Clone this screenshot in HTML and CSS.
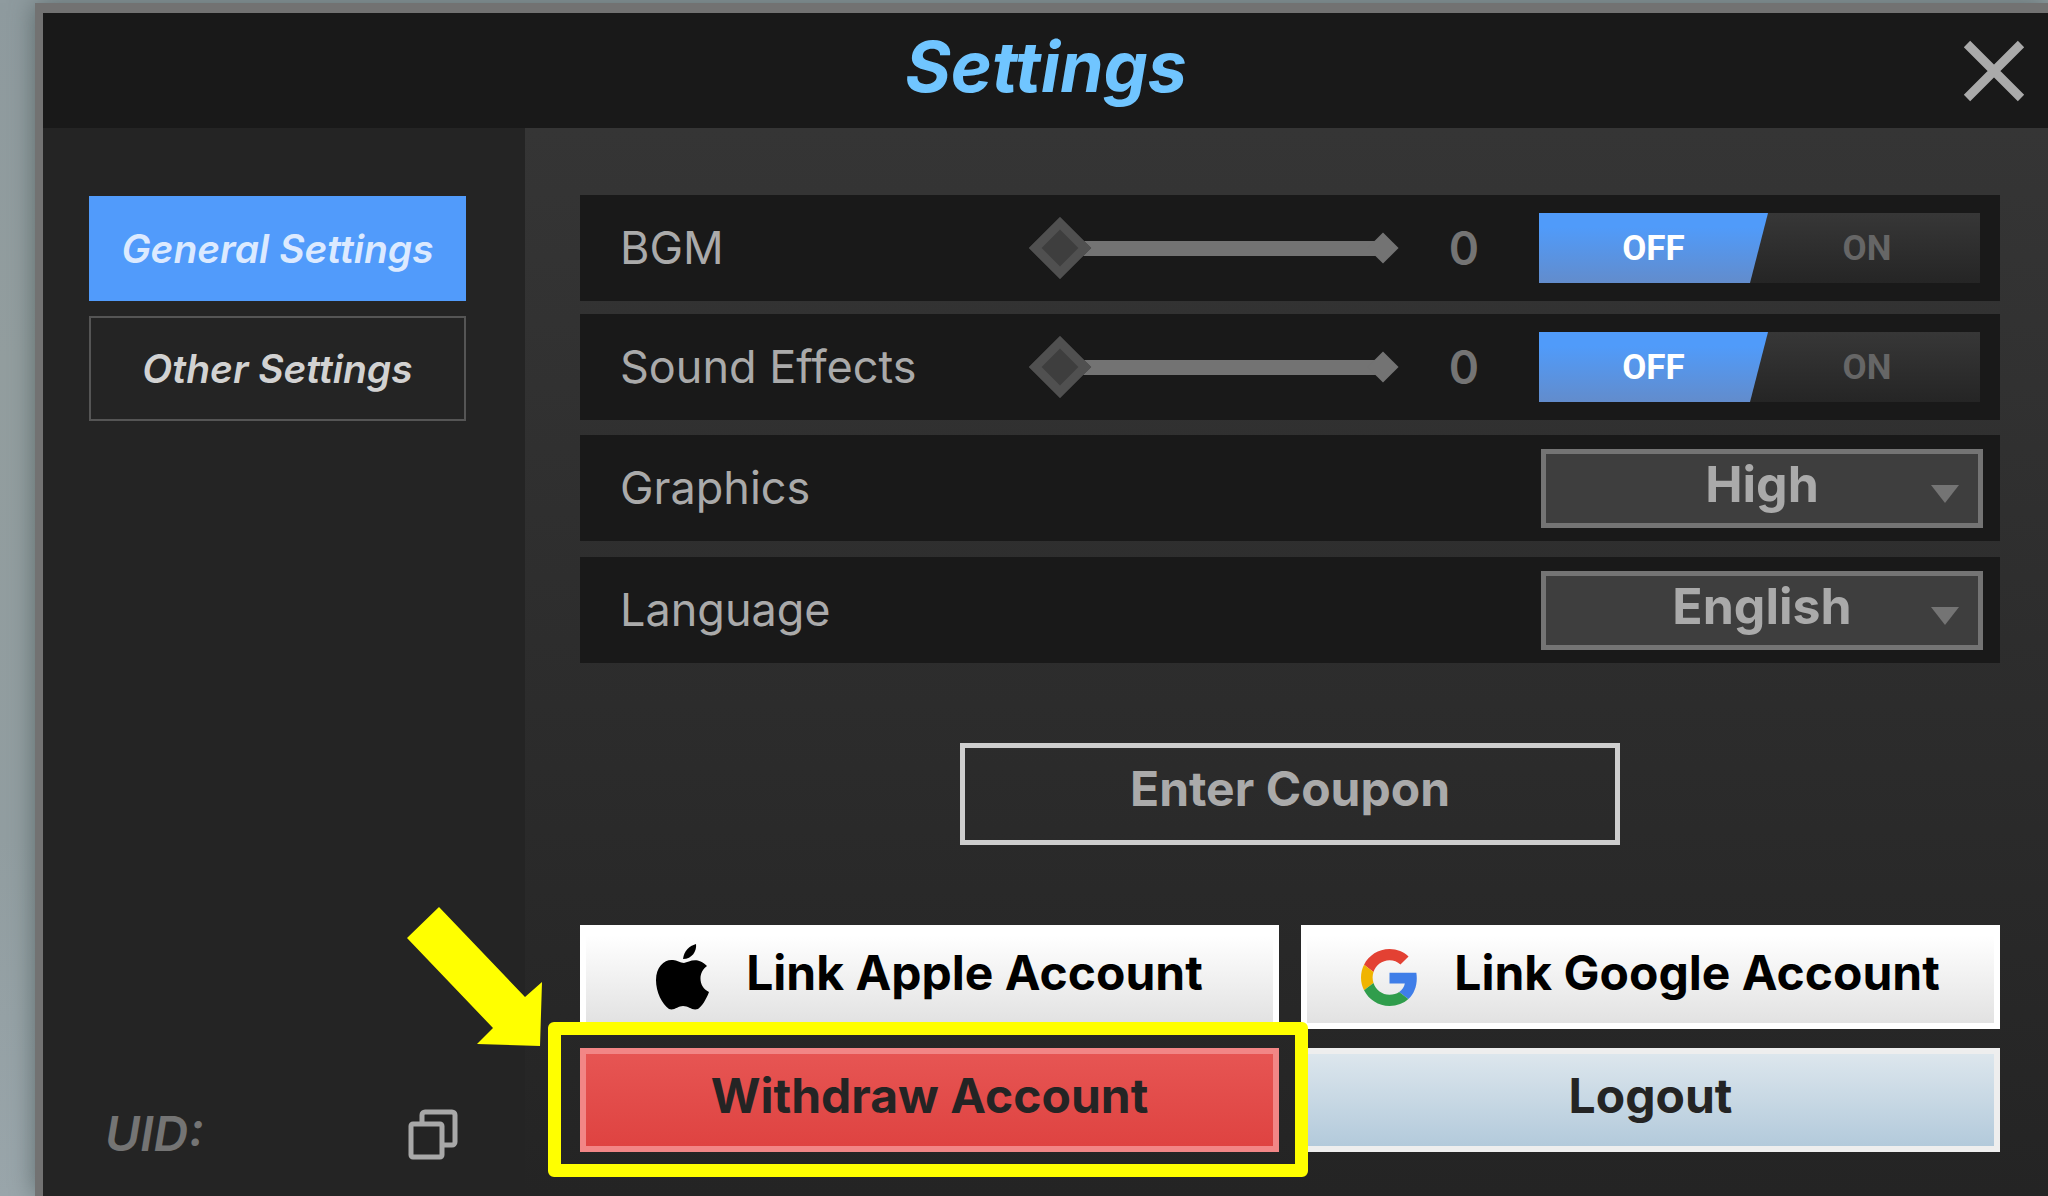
FILE: index.html
```html
<!doctype html>
<html lang="en">
<head>
  <meta charset="utf-8">
  <meta name="viewport" content="width=device-width, initial-scale=1">
  <title>Settings</title>
<link rel="stylesheet" href="styles.css">
</head>

<body>

<div id="panel">

  <header id="header">
    <h1>Settings</h1>
    <button class="close" type="button" aria-label="Close">
      <svg width="62" height="62" viewBox="0 0 62 62"><path d="M4 4L58 58M58 4L4 58"/></svg>
    </button>
  </header>

  <div id="content">

    <nav id="sidebar">
      <button class="tab active" type="button">General Settings</button>
      <button class="tab" type="button">Other Settings</button>
      <div class="uid">
        <span>UID:</span>
        <button class="copy" type="button" aria-label="Copy UID">
          <svg width="50" height="51" viewBox="0 0 50 51">
            <path d="M14 14V6a3 3 0 0 1 3-3h27a3 3 0 0 1 3 3v27a3 3 0 0 1-3 3h-8"/>
            <rect x="3" y="15" width="31" height="33" rx="2"/>
          </svg>
        </button>
      </div>
    </nav>

    <main id="main">

      <div class="rows audio">
        <div class="row">
          <label class="name" for="bgm">BGM</label>
          <div class="slider"><input type="range" id="bgm" min="0" max="100" value="0"></div>
          <output class="value" for="bgm">0</output>
          <div class="toggle">
            <input type="radio" name="bgm-on" id="bgm-off" checked>
            <label class="off" for="bgm-off">OFF</label>
            <input type="radio" name="bgm-on" id="bgm-on">
            <label class="on" for="bgm-on">ON</label>
          </div>
        </div>
        <div class="row">
          <label class="name" for="sfx">Sound Effects</label>
          <div class="slider"><input type="range" id="sfx" min="0" max="100" value="0"></div>
          <output class="value" for="sfx">0</output>
          <div class="toggle">
            <input type="radio" name="sfx-on" id="sfx-off" checked>
            <label class="off" for="sfx-off">OFF</label>
            <input type="radio" name="sfx-on" id="sfx-on">
            <label class="on" for="sfx-on">ON</label>
          </div>
        </div>
      </div>

      <div class="rows display">
        <div class="row">
          <label class="name" for="graphics">Graphics</label>
          <div class="select">
            <select id="graphics"><option>High</option></select>
          </div>
        </div>
        <div class="row">
          <label class="name" for="language">Language</label>
          <div class="select">
            <select id="language"><option>English</option></select>
          </div>
        </div>
      </div>

      <button class="coupon" type="button">Enter Coupon</button>

      <div id="account">
        <button class="btn link" type="button">
          <svg width="54" height="66" viewBox="0 0 54 66">
            <path d="M27 15C28 7 33 2 40 0C41 7 36 15 27 15Z"/>
            <path d="M51 22C42 28 42 43 53 48C50 56 46 62 42 65C36 67 33 62 27 62C22 62 18 67 13 65C6 60 0 48 0 36C0 22 9 15 17 16C21 16 24 19 28 19C33 18 41 12 51 22Z"/>
          </svg>
          <span>Link Apple Account</span>
        </button>
        <button class="btn link" type="button">
          <svg width="57" height="57" viewBox="0 0 48 48">
            <path fill="#e34133" d="M24 9.500c3.540 0 6.710 1.220 9.210 3.600l6.850-6.850C35.900 2.380 30.470 0 24 0 14.620 0 6.510 5.380 2.560 13.220l7.980 6.190C12.430 13.720 17.740 9.500 24 9.500z"/>
            <path fill="#3f7ee8" d="M46.980 24.550c0-1.570-.15-3.090-.38-4.550H24v9.020h12.940c-.58 2.960-2.260 5.480-4.780 7.180l7.730 6c4.510-4.180 7.090-10.360 7.090-17.650z"/>
            <path fill="#f0b400" d="M10.530 28.590c-.48-1.450-.76-2.990-.76-4.590s.27-3.140.76-4.590l-7.980-6.190C.92 16.460 0 20.120 0 24c0 3.880.92 7.540 2.560 10.780l7.970-6.190z"/>
            <path fill="#309d4c" d="M24 48c6.480 0 11.930-2.130 15.890-5.810l-7.730-6c-2.150 1.450-4.920 2.300-8.160 2.300-6.260 0-11.570-4.220-13.470-9.910l-7.980 6.190C6.510 42.620 14.620 48 24 48z"/>
          </svg>
          <span>Link Google Account</span>
        </button>
        <div class="marked">
          <button class="btn withdraw" type="button">Withdraw Account</button>
          <div class="frame"></div>
          <svg class="arrow" width="135" height="139" viewBox="0 0 135 139">
            <path d="M0 31L32 0L118 90L135 75L133 139L70 137L86 121Z"/>
          </svg>
        </div>
        <button class="btn logout" type="button">Logout</button>
      </div><!-- /#account -->

    </main>

  </div>

</div>

</body>
</html>
```
FILE: styles.css
```css
html {
  box-sizing: border-box;
}
*, *:before, *:after {
  box-sizing: inherit;
}

body {
  margin: 0;
  padding: 3px 0 0 35px;
  font-family: Inter, 'Liberation Sans', sans-serif;
  background: linear-gradient(#8f9b9f, #939e9f 30%, #929ea1 70%, #9aa6ab);
  overflow: hidden;
}

button, select {
  font-family: inherit;
  margin: 0;
  padding: 0;
  border-radius: 0;
  cursor: pointer;
}

#panel {
  display: flex;
  flex-direction: column;
  min-height: calc(100vh - 3px);
  border-top: 10px solid #727272;
  border-left: 8px solid #727272;
  box-shadow: 0 0 24px rgba(70, 85, 85, 0.7);
}

#header {
  display: flex;
  align-items: center;
  height: 115px;
  padding: 0 23px 0 86px;
  background: #191919;
}

h1 {
  flex: 1;
  margin: 0;
  padding: 0 0 8px 0;
  text-align: center;
  font-size: 70px;
  line-height: 80px;
  font-weight: 700;
  font-style: italic;
  color: #70c5ff;
}

.close {
  height: 62px;
  border: 0;
  background: none;
}

.close path {
  stroke: #aaa;
  stroke-width: 9;
}

#content {
  flex: 1;
  display: flex;
}

#sidebar {
  display: flex;
  flex-direction: column;
  flex: 0 0 482px;
  padding: 68px 59px 34px 46px;
  background: #242424;
}

.tab {
  height: 105px;
  margin-bottom: 15px;
  border: 2px solid #555;
  background: none;
  color: #d2d2d2;
  font-size: 39px;
  font-weight: 600;
  font-style: italic;
}

.tab.active {
  border-color: #519bfb;
  background: #519bfb;
  color: #dceaff;
}

.uid {
  display: flex;
  justify-content: space-between;
  align-items: center;
  margin-top: auto;
  padding: 0 8px 0 16px;
  font-size: 48px;
  line-height: 56px;
  font-weight: 600;
  font-style: italic;
  color: #747474;
}

.copy {
  height: 51px;
  border: 0;
  background: none;
}

.copy svg, .close svg {
  display: block;
  fill: none;
}

.copy svg {
  stroke: #a8a8a8;
  stroke-width: 5;
}

#main {
  flex: 1;
  display: flex;
  flex-direction: column;
  padding: 67px 48px 44px 55px;
  background: linear-gradient(#353535, #2b2b2b 60%, #242424);
}

.rows {
  display: grid;
  gap: 16px;
}

.audio {
  gap: 13px;
  margin-bottom: 15px;
}

.row {
  display: flex;
  align-items: center;
  height: 106px;
  padding: 0 17px 0 40px;
  background: #191919;
}

.audio .row {
  padding-right: 20px;
}

.name {
  flex: 1;
  padding-bottom: 2px;
  font-size: 45px;
  color: #aaa;
}

/* slider */
.slider {
  position: relative;
  width: 345px;
  height: 44px;
}

.slider:after {
  content: "";
  position: absolute;
  right: -11px;
  top: 11px;
  width: 22px;
  height: 22px;
  background: #737373;
  transform: rotate(45deg);
}

.slider input {
  display: block;
  width: 100%;
  height: 44px;
  margin: 0;
  -webkit-appearance: none;
  appearance: none;
  background: linear-gradient(#737373, #737373) center / 100% 15px no-repeat;
}

.slider input::-webkit-slider-thumb {
  -webkit-appearance: none;
  width: 44px;
  height: 44px;
  border: 9px solid #505050;
  background: #3e3e3e;
  transform: rotate(45deg);
}

.value {
  width: 156px;
  padding-left: 6px;
  text-align: center;
  font-size: 46px;
  font-weight: 600;
  color: #747474;
}

/* off / on switch */
.toggle {
  display: flex;
  position: relative;
  width: 441px;
  height: 70px;
  background: linear-gradient(#373737, #252525);
}

.toggle input {
  position: absolute;
  opacity: 0;
}

.toggle label {
  flex: 1;
  padding-top: 1px;
  text-align: center;
  font-family: Roboto, sans-serif;
  font-size: 35px;
  line-height: 70px;
  font-weight: 700;
  color: #666;
}

.toggle .off {
  flex: 0 0 229px;
  height: 70px;
  clip-path: polygon(0 0, 100% 0, calc(100% - 18px) 100%, 0 100%);
}

.toggle .on {
  padding-right: 14px;
}

.toggle input:checked + label {
  color: #fff;
  background: linear-gradient(#509bfa 20%, #628ccc);
}

.select {
  position: relative;
  width: 442px;
}

.select:after {
  content: "";
  position: absolute;
  right: 24px;
  top: 36px;
  border: 14px solid transparent;
  border-top: 18px solid #747474;
  border-bottom: 0;
  pointer-events: none;
}

select {
  -webkit-appearance: none;
  appearance: none;
  display: block;
  width: 100%;
  height: 79px;
  padding-bottom: 10px;
  border: 5px solid #747474;
  background: #3e3e3e;
  color: #aaa;
  font-size: 50px;
  font-weight: 700;
  text-align: center;
  text-align-last: center;
}

.coupon {
  align-self: center;
  width: 660px;
  height: 102px;
  margin: 80px 0;
  padding-bottom: 12px;
  border: 5px solid #cecece;
  background: none;
  color: #aaa;
  font-size: 48px;
  font-weight: 700;
}

#account {
  display: grid;
  grid-template-columns: 1fr 1fr;
  gap: 19px 22px;
}

.btn {
  display: flex;
  justify-content: center;
  align-items: center;
  gap: 36px;
  width: 100%;
  height: 104px;
  padding-bottom: 10px;
  border: 6px solid #fff;
  background-origin: border-box;
  color: #242424;
  font-size: 48px;
  font-weight: 700;
  white-space: nowrap;
}

.link {
  padding-bottom: 0;
  background-image: linear-gradient(#fff 10%, #e0e0e0);
  color: #000;
}

.link span {
  padding-bottom: 10px;
}

.withdraw {
  border-color: #f28686;
  background-image: linear-gradient(#e75654, #de4240);
}

.logout {
  border-color: #eee;
  background-image: linear-gradient(#dfe8ee, #b0c8da);
}

.marked {
  position: relative;
  z-index: 1;
}

.frame {
  position: absolute;
  inset: -26px -29px -25px -32px;
  border: 13px solid #ff0;
  border-radius: 6px;
  pointer-events: none;
}

.arrow {
  position: absolute;
  left: -173px;
  top: -141px;
  fill: #ff0;
}
```
